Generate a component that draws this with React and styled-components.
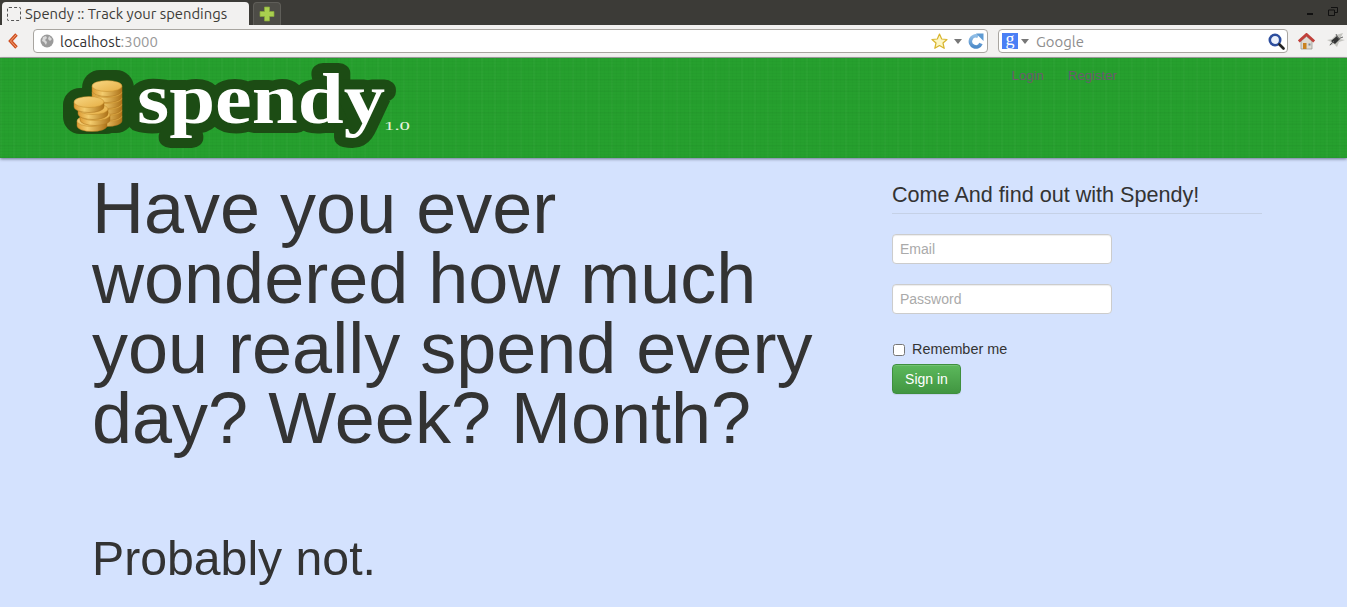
import styled, { createGlobalStyle } from 'styled-components';

const GlobalStyle = createGlobalStyle`
  html, body {
    margin: 0;
    padding: 0;
    height: 100%;
    overflow: hidden;
    background: #d4e2fe;
  }

  body {
    font-family: "Liberation Sans", Arial, sans-serif;
    color: #333;
  }
`;

const Page = styled.div`
  display: flex;
  flex-direction: column;
  height: 607px;
  overflow: hidden;
`;

const TitleBar = styled.div`
  display: flex;
  flex: none;
  align-items: flex-end;
  justify-content: space-between;
  height: 25px;
  padding-left: 2px;
  background: #3c3b37;
`;

const TabStrip = styled.div`
  display: flex;
  align-items: flex-end;
`;

const Tab = styled.div`
  display: flex;
  align-items: center;
  gap: 4px;
  width: 247px;
  height: 23px;
  padding-left: 5px;
  box-sizing: border-box;
  background: #f2f1f0;
  border-radius: 4px 4px 0 0;
  font-family: Ubuntu, "Noto Sans", sans-serif;
  font-size: 14.8px;
  color: #3c3b37;
`;

const Favicon = styled.span`
  width: 12px;
  height: 12px;
  border: 1px dashed #555;
  border-radius: 2px;
`;

const NewTab = styled.div`
  display: flex;
  align-items: center;
  justify-content: center;
  width: 28px;
  height: 23px;
  margin-left: 4px;
  box-sizing: border-box;
  background: #4d4c47;
  border: 1px solid #5f5e59;
  border-bottom: 0;
  border-radius: 4px 4px 0 0;
`;

const WindowControls = styled.div`
  display: flex;
  align-items: flex-start;
  gap: 15px;
  height: 25px;
  padding: 7px 9px 0 0;
  box-sizing: border-box;
`;

const MinimizeGlyph = styled.svg`
  margin-top: 6px;
`;

const Toolbar = styled.div`
  display: flex;
  flex: none;
  align-items: center;
  height: 33px;
  padding: 1px 0;
  box-sizing: border-box;
  background: #f2f1f0;
  border-bottom: 1px solid #a9a8a5;
`;

const BackButton = styled.div`
  display: flex;
  flex: none;
  justify-content: center;
  width: 27px;
`;

const Field = styled.div`
  display: flex;
  flex: none;
  align-items: center;
  height: 24px;
  box-sizing: border-box;
  background: #fff;
  border: 1px solid #a8a5a0;
  border-radius: 4px;
`;

const UrlField = styled(Field)`
  width: 955px;
  margin-left: 6px;
  padding: 0 3px 0 6px;
`;

const SearchField = styled(Field)`
  width: 290px;
  margin-left: 10px;
  padding: 0 2px 0 3px;
`;

const FieldText = styled.span`
  margin-left: ${(p) => p.$gap}px;
  flex: 1;
  font-family: Ubuntu, "Noto Sans", sans-serif;
  font-size: 14.9px;
  color: ${(p) => p.$color};
`;

const Port = styled.span`
  color: #999;
`;

const Arrow = styled.span`
  width: 0;
  height: 0;
  margin: ${(p) => p.$margin};
  border-left: 4px solid transparent;
  border-right: 4px solid transparent;
  border-top: 5px solid #777;
`;

const GoogleMark = styled.span`
  flex: none;
  width: 16px;
  height: 16px;
  background: #4a7ff5;
  color: #fff;
  font-family: "Liberation Serif", serif;
  font-size: 18px;
  line-height: 13px;
  text-align: center;
`;

const ToolIcons = styled.div`
  display: flex;
  flex: none;
  align-items: center;
  gap: 12px;
  margin-left: 10px;
`;

const Header = styled.header`
  position: relative;
  flex: none;
  display: flex;
  justify-content: space-between;
  height: 100px;
  padding-left: 60px;
  box-sizing: border-box;
  background-color: #26a02e;
  background-image:
    repeating-linear-gradient(0deg, rgba(0, 70, 0, 0.03) 0 1px, transparent 1px 3px),
    repeating-linear-gradient(0deg, rgba(0, 70, 0, 0.03) 0 2px, transparent 2px 11px),
    repeating-linear-gradient(90deg, rgba(0, 60, 0, 0.02) 0 1px, transparent 1px 4px),
    repeating-linear-gradient(90deg, rgba(255, 255, 255, 0.02) 0 2px, transparent 2px 13px);
  box-shadow: 0 1px 3px rgba(0, 0, 30, 0.5);
`;

const LogoMark = styled.svg`
  display: block;
`;

const Wordmark = styled.text`
  font-family: "Liberation Serif", "Times New Roman", serif;
  font-weight: 700;
  font-size: 71px;
  fill: #fff;
  stroke: #1c4c14;
  stroke-width: 20px;
  stroke-linejoin: round;
  paint-order: stroke fill;
`;

const VersionText = styled.text`
  font-family: "Liberation Serif", serif;
  font-size: 12px;
  fill: #e6f3df;
`;

const Nav = styled.nav`
  display: flex;
  gap: 24px;
  margin-right: 230px;
  padding-top: 10px;
`;

const NavLink = styled.a`
  font-size: 13.2px;
  line-height: 16px;
  color: #6b5b6d;
`;

const Content = styled.main`
  display: flex;
  flex: 1;
  padding: 15px 85px 0 92px;
`;

const Pitch = styled.section`
  width: 800px;
`;

const Headline = styled.h1`
  margin: 0;
  font-size: 72px;
  font-weight: 400;
  line-height: 70px;
  color: #333;
`;

const Subline = styled.h2`
  margin: 70px 0 0;
  font-size: 48.2px;
  font-weight: 400;
  line-height: 70px;
  color: #333;
`;

const SignIn = styled.form`
  width: 370px;
`;

const FormTitle = styled.div`
  height: 41px;
  box-sizing: border-box;
  padding-top: 6px;
  border-bottom: 1px solid #c5d1e6;
  font-size: 21.6px;
  line-height: 31px;
  color: #333;
`;

const Input = styled.input`
  display: block;
  width: 220px;
  height: 30px;
  box-sizing: border-box;
  margin-top: ${(p) => p.$top}px;
  padding: 4px 7px;
  background: #fff;
  border: 1px solid #ccc;
  border-radius: 4px;
  box-shadow: inset 0 1px 1px rgba(0, 0, 0, 0.075);
  font-family: inherit;
  font-size: 14px;
  color: #555;

  &::placeholder {
    color: #aaa;
    opacity: 1;
  }
`;

const Remember = styled.label`
  display: flex;
  align-items: center;
  gap: 7px;
  margin-top: 25px;
  height: 20px;
  font-size: 14.4px;
  line-height: 20px;
  color: #333;
`;

const Check = styled.input`
  width: 12px;
  height: 12px;
  margin: 1px 0 0 1px;
`;

const SubmitButton = styled.button`
  display: block;
  width: 69px;
  height: 30px;
  margin-top: 5px;
  padding: 0;
  background: linear-gradient(#5cb85c, #419641);
  border: 1px solid #3e8f3e;
  border-radius: 4px;
  box-shadow: inset 0 1px 0 rgba(255, 255, 255, 0.15), 0 1px 1px rgba(0, 0, 0, 0.075);
  font-family: inherit;
  font-size: 14px;
  color: #fff;
`;

// coin centres in page coordinates, drawn bottom-up
const RIGHT_STACK = [
  [107, 116],
  [107, 110],
  [107, 104],
  [107, 98],
  [107, 92],
  [107, 86],
];
const LEFT_STACK = [
  [92, 121],
  [95, 115],
  [93, 109],
  [89, 102],
];

function Coin({ x, y, rx = 15 }) {
  return (
    <g>
      <path d={`M${x - rx} ${y}v5a${rx} 5.5 0 0 0 ${rx * 2} 0v-5z`} fill="url(#coinEdge)" stroke="#a8701a" strokeWidth="0.5" />
      <ellipse cx={x} cy={y} rx={rx} ry="5.5" fill="url(#coinTop)" stroke="#c08a2a" strokeWidth="0.5" />
    </g>
  );
}

function Logo() {
  return (
    <LogoMark width="360" height="100" viewBox="60 58 360 100">
      <defs>
        <linearGradient id="coinTop" x1="0" y1="0" x2="1" y2="1">
          <stop offset="0" stopColor="#f8d884" />
          <stop offset="1" stopColor="#e6ae44" />
        </linearGradient>
        <linearGradient id="coinEdge" x1="0" y1="0" x2="1" y2="0">
          <stop offset="0" stopColor="#dd9c34" />
          <stop offset="0.35" stopColor="#f3cc6e" />
          <stop offset="1" stopColor="#ad7218" />
        </linearGradient>
      </defs>
      <rect x="63" y="88" width="60" height="46" rx="17" fill="#1c4c14" />
      <rect x="82" y="70" width="52" height="63" rx="18" fill="#1c4c14" />
      {RIGHT_STACK.map(([x, y]) => (
        <Coin key={y} x={x} y={y} rx={15} />
      ))}
      {LEFT_STACK.map(([x, y]) => (
        <Coin key={y} x={x} y={y} rx={15} />
      ))}
      <Wordmark x="137" y="123" textLength="248" lengthAdjust="spacingAndGlyphs">
        spendy
      </Wordmark>
      <VersionText x="384" y="130" textLength="26" lengthAdjust="spacingAndGlyphs">
        1.0
      </VersionText>
    </LogoMark>
  );
}

function GlobeIcon() {
  return (
    <svg width="14" height="14" viewBox="0 0 14 14">
      <circle cx="7" cy="7" r="6.5" fill="#9a9a9a" />
      <path d="M3 3l3-1 1 2-2 2 2 2-1 3-2-3-2-1zM9 2l3 3-2 2-2-2z" fill="#d8d8d8" />
    </svg>
  );
}

function StarIcon() {
  return (
    <svg width="17" height="17" viewBox="0 0 17 17">
      <path
        d="M8.5 1l2.2 5 5.3.5-4 3.5 1.2 5.3-4.700-2.800-4.700 2.800 1.200-5.300-4-3.500 5.300-.5z"
        fill="#fdf6c4"
        stroke="#d8b52e"
        strokeWidth="1.2"
        strokeLinejoin="round"
      />
    </svg>
  );
}

function ReloadIcon() {
  return (
    <svg width="16" height="16" viewBox="0 0 16 16">
      <defs>
        <linearGradient id="reloadFill" x1="0" y1="0" x2="0" y2="1">
          <stop offset="0" stopColor="#8fbde6" />
          <stop offset="1" stopColor="#4f8cc9" />
        </linearGradient>
      </defs>
      <path d="M13 10.5A5.5 5.5 0 1 1 10 3.3" fill="none" stroke="url(#reloadFill)" strokeWidth="3.6" />
      <path d="M8 .5h7.5V8z" fill="#5f9bd3" />
    </svg>
  );
}

function SearchIcon() {
  return (
    <svg width="17" height="17" viewBox="0 0 17 17">
      <circle cx="7" cy="7" r="5.2" fill="#eaf0fb" stroke="#2d4e9e" strokeWidth="2.6" />
      <path d="M11.5 11.5l4 4" stroke="#222" strokeWidth="2.6" strokeLinecap="round" />
    </svg>
  );
}

function HomeIcon() {
  return (
    <svg width="17" height="17" viewBox="0 0 17 17">
      <path d="M3 8v8h11V8L8.5 3.5z" fill="#dedad2" stroke="#8f8f8a" strokeWidth="0.7" />
      <path d="M.8 8.5L8.5 1.5 16.2 8.5" fill="none" stroke="#c0403a" strokeWidth="2.8" />
      <path d="M5 10h3.5v6H5z" fill="#c9821f" />
      <path d="M10.5 10.5h2v2h-2z" fill="#7a8a9a" />
    </svg>
  );
}

function BugIcon() {
  return (
    <svg width="18" height="16" viewBox="0 0 18 16">
      <path d="M0 7l5-1 4-4 7-2-3 6 5 1-6 2-2 5-3-3-5 2 2-4z" fill="#c4c4bf" />
      <path d="M4 8l6-5 3 3-5 5z" fill="#333" />
      <path d="M9 1l2 4M16 4l-5 2M3 12l4-4" stroke="#666" strokeWidth="1" />
    </svg>
  );
}

function BackIcon() {
  return (
    <svg width="11" height="16" viewBox="0 0 11 16">
      <path d="M8.5 1.5L2.5 8l6 6.5" fill="none" stroke="#cf4f22" strokeWidth="3.4" />
      <path d="M8.5 1.5L2.5 8l6 6.5" fill="none" stroke="#f2a878" strokeWidth="1" />
    </svg>
  );
}

function PlusIcon() {
  return (
    <svg width="16" height="16" viewBox="0 0 16 16">
      <path d="M5.5 1h5v4.5H15v5h-4.5V15h-5v-4.5H1v-5h4.5z" fill="#a9cf4f" stroke="#86a83a" strokeWidth="0.7" />
    </svg>
  );
}

function WindowIcons() {
  return (
    <WindowControls>
      <MinimizeGlyph width="6" height="2" viewBox="0 0 6 2">
        <rect width="6" height="2" fill="#111" />
      </MinimizeGlyph>
      <svg width="10" height="9" viewBox="0 0 10 9">
        <path d="M3 .5h6.5v5H7M.5 3h6v5.5h-6z" fill="none" stroke="#111" strokeWidth="1" />
      </svg>
    </WindowControls>
  );
}

export default function App() {
  return (
    <>
      <GlobalStyle />
      <Page>
        <TitleBar>
          <TabStrip>
            <Tab>
              <Favicon />
              Spendy :: Track your spendings
            </Tab>
            <NewTab>
              <PlusIcon />
            </NewTab>
          </TabStrip>
          <WindowIcons />
        </TitleBar>
        <Toolbar>
          <BackButton>
            <BackIcon />
          </BackButton>
          <UrlField>
            <GlobeIcon />
            <FieldText $gap={6} $color="#333">
              localhost<Port>:3000</Port>
            </FieldText>
            <StarIcon />
            <Arrow $margin="0 6px 0 6px" />
            <ReloadIcon />
          </UrlField>
          <SearchField>
            <GoogleMark>g</GoogleMark>
            <Arrow $margin="0 0 0 3px" />
            <FieldText $gap={7} $color="#8d8d8d">
              Google
            </FieldText>
            <SearchIcon />
          </SearchField>
          <ToolIcons>
            <HomeIcon />
            <BugIcon />
          </ToolIcons>
        </Toolbar>
        <Header>
          <Logo />
          <Nav>
            <NavLink>Login</NavLink>
            <NavLink>Register</NavLink>
          </Nav>
        </Header>
        <Content>
          <Pitch>
            <Headline>Have you ever wondered how much you really spend every day? Week? Month?</Headline>
            <Subline>Probably not.</Subline>
          </Pitch>
          <SignIn>
            <FormTitle>Come And find out with Spendy!</FormTitle>
            <Input type="text" placeholder="Email" $top={20} />
            <Input type="password" placeholder="Password" $top={20} />
            <Remember>
              <Check type="checkbox" />
              Remember me
            </Remember>
            <SubmitButton type="button">Sign in</SubmitButton>
          </SignIn>
        </Content>
      </Page>
    </>
  );
}
